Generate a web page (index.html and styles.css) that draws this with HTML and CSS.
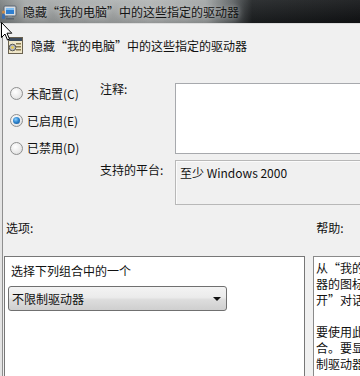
FILE: index.html
```html
<!DOCTYPE html>
<html lang="zh-CN">
<head>
    <meta charset="UTF-8">
    <title>隐藏“我的电脑”中的这些指定的驱动器</title>
    <link rel="stylesheet" href="styles.css">
</head>
<body>
    <div class="window">
        <div class="titlebar">
            <svg class="title-icon" width="16" height="16" viewBox="0 0 16 16">
                <rect x="3" y="2" width="12" height="10" rx="1" fill="#d8dde2" stroke="#5b6570"/>
                <rect x="5" y="4" width="8" height="6" fill="#2f7fd0"/>
                <rect x="5" y="4" width="8" height="2" fill="#7fbcf0"/>
                <rect x="7" y="12" width="4" height="2" fill="#7a8590"/>
                <rect x="5" y="14" width="8" height="1.5" fill="#59636d"/>
                <circle cx="2.5" cy="8" r="1.6" fill="#c98a4a"/>
                <rect x="1" y="10" width="3" height="5" rx="1" fill="#3d6fb0"/>
            </svg>
            <span class="title-text">隐藏“我的电脑”中的这些指定的驱动器</span>
        </div>

        <div class="content">
            <div class="header">
                <svg class="header-icon" width="15" height="17" viewBox="0 0 15 17">
                    <rect x="0.5" y="0.5" width="14" height="16" fill="#efe6c8" stroke="#6a6250"/>
                    <rect x="1" y="1" width="13" height="3" fill="#3c4a5c"/>
                    <rect x="8" y="6" width="5" height="1.5" fill="#8a7b52"/>
                    <rect x="8" y="9" width="5" height="1.5" fill="#8a7b52"/>
                    <rect x="8" y="12" width="5" height="1.5" fill="#8a7b52"/>
                    <circle cx="4.5" cy="10.5" r="3.3" fill="#b9b9b9" stroke="#555"/>
                    <circle cx="4.5" cy="10.5" r="1.2" fill="#f4d23c"/>
                </svg>
                <span>隐藏“我的电脑”中的这些指定的驱动器</span>
            </div>

            <div class="settings">
                <div class="radios">
                    <label class="radio"><span class="dot"></span>未配置(C)</label>
                    <label class="radio"><span class="dot checked"></span>已启用(E)</label>
                    <label class="radio"><span class="dot"></span>已禁用(D)</label>
                </div>
                <div class="field-label first">注释:</div>
                <div class="comment-box"></div>
                <div class="field-label second">支持的平台:</div>
                <div class="platform-box">至少 Windows 2000</div>
            </div>

            <div class="section-labels">
                <span>选项:</span>
                <span class="help-label">帮助:</span>
            </div>

            <div class="panes">
                <div class="options-box">
                    <div class="options-text">选择下列组合中的一个</div>
                    <div class="select">
                        <span>不限制驱动器</span>
                        <span class="arrow"></span>
                    </div>
                </div>
                <div class="help-box">
                    <div>从“我的电脑”中删除代表所选硬盘驱动</div>
                    <div>器的图标。另外，这些驱动器不会出现在“打</div>
                    <div>开”对话框中。</div>
                    <div>&nbsp;</div>
                    <div>要使用此设置，请从下拉列表中选择驱动器组</div>
                    <div>合。要显示所有驱动器，请禁用此设置或选择“不限</div>
                    <div>制驱动器”选项。</div>
                </div>
            </div>
        </div>

        <svg class="cursor" width="12" height="19" viewBox="0 0 12 19">
            <path d="M0.5 0.5 L0.5 15.5 L4 12 L6.5 18 L8.5 17 L6 11.2 L10.8 11.2 Z" fill="#fff" stroke="#000" stroke-width="1"/>
        </svg>
    </div>
</body>
</html>
```

FILE: styles.css
```css
body {
    margin: 0;
    background: #f0f0f0;
    font-family: "Noto Sans CJK SC", "Noto Sans", sans-serif;
    font-size: 12px;
    line-height: 16px;
    color: #111;
}

.window {
    position: relative;
    width: 360px;
    height: 376px;
    overflow: hidden;
    background: #f0f0f0;
}

.titlebar {
    height: 23px;
    display: flex;
    align-items: center;
    background:
        linear-gradient(to bottom, rgba(255,255,255,0.08), rgba(0,0,0,0.18)),
        linear-gradient(to right, #7c8182 0, #a4a8a8 25px, #b3b6b6 150px, #a3a7a7 205px, #5d6264 232px, #1e2123 252px, #121416 100%);
    border-bottom: 1px solid #dcdcdc;
}
.title-icon { margin-left: 1px; }
.title-text {
    margin-left: 6px;
    color: #141414;
    text-shadow: 0 0 6px rgba(255,255,255,0.7);
}

.content {
    box-shadow: inset 2px 0 0 #e4e4e4, inset 3px 0 0 #8f8f8f;
    height: 352px;
}

.header {
    display: flex;
    align-items: center;
    height: 17px;
    padding: 13px 0 0 8px;
}
.header span { margin-left: 8px; }

.settings {
    display: grid;
    grid-template-columns: 100px 75px 200px;
    grid-template-rows: 74px 51px;
    margin-top: 26px;
}
.radios {
    grid-row: 1 / 3;
    grid-column: 1;
}
.radio {
    display: flex;
    align-items: center;
    height: 27px;
    padding-left: 10px;
}
.radio:nth-child(3) { height: 28px; }
.dot {
    width: 11px;
    height: 11px;
    margin-right: 4px;
    border: 1px solid #8e8f8f;
    border-radius: 50%;
    background: radial-gradient(circle at 40% 35%, #ffffff 0, #e9e9e9 60%, #d4d4d4 100%);
    position: relative;
}
.dot.checked::after {
    content: "";
    position: absolute;
    left: 2px;
    top: 2px;
    width: 7px;
    height: 7px;
    border-radius: 50%;
    background: radial-gradient(circle at 40% 35%, #8cd0ff 0, #2f86cf 45%, #0b4a8c 100%);
}

.field-label { grid-column: 2; }
.field-label.first { grid-row: 1; padding-top: 1px; }
.field-label.second { grid-row: 2; padding-top: 8px; }

.comment-box {
    grid-column: 3;
    grid-row: 1;
    margin-top: 3px;
    height: 69px;
    background: #fff;
    border: 1px solid #a7a9ad;
    border-right: none;
}
.platform-box {
    grid-column: 3;
    grid-row: 2;
    margin-top: 6px;
    height: 39px;
    padding: 4px 0 0 4px;
    border: 1px solid #b8b8b8;
    border-right: none;
    box-shadow: inset 1px 1px 0 #fbfbfb;
}

.section-labels {
    display: flex;
    margin-top: 15px;
    padding-left: 6px;
    height: 16px;
}
.help-label { margin-left: 283px; }

.panes {
    display: flex;
    gap: 8px;
    margin-top: 20px;
    padding-left: 4px;
}
.options-box {
    width: 293px;
    height: 130px;
    padding: 6px 3px 0 3px;
    background: #fff;
    border: 1px solid #777;
    flex-shrink: 0;
}
.options-text { padding-left: 3px; }
.select {
    display: flex;
    align-items: center;
    justify-content: space-between;
    box-sizing: border-box;
    width: 219px;
    height: 25px;
    margin-top: 7px;
    padding: 0 5px 0 3px;
    border: 1px solid #707070;
    border-radius: 3px;
    background: linear-gradient(to bottom, #f3f3f3 0, #ebebeb 45%, #dddddd 55%, #cfcfcf 100%);
}
.arrow {
    width: 0;
    height: 0;
    border-left: 4px solid transparent;
    border-right: 4px solid transparent;
    border-top: 4px solid #111;
}

.help-box {
    width: 200px;
    height: 130px;
    padding: 3px 0 0 2px;
    background: #fff;
    border: 1px solid #8a8a8a;
    flex-shrink: 0;
    white-space: nowrap;
    overflow: hidden;
}

.cursor {
    position: absolute;
    left: 1px;
    top: 22px;
}
```
